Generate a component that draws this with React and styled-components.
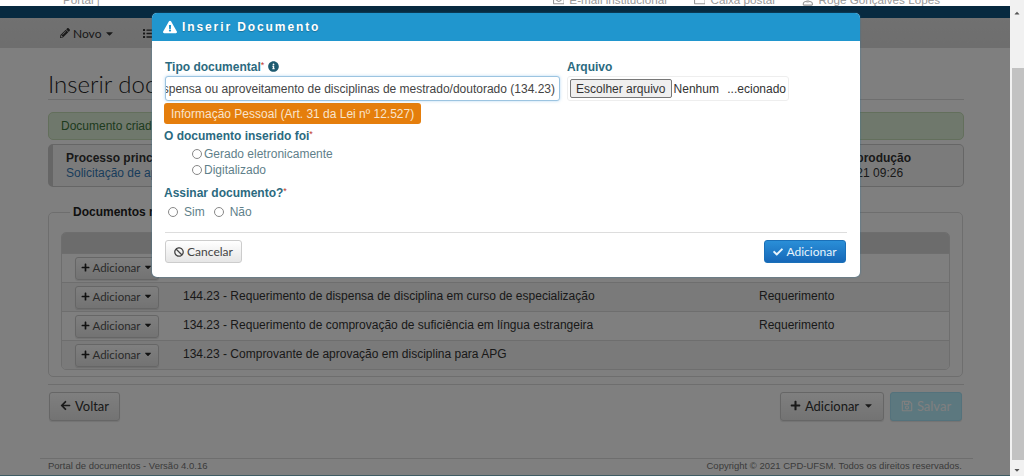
import styled, { createGlobalStyle } from "styled-components";
import {
	FaPencilAlt, FaCaretDown, FaList, FaExclamationTriangle, FaInfoCircle, FaBan,
	FaCheck, FaPlus, FaArrowLeft, FaRegSave, FaRegEnvelope, FaRegFolder, FaRegUser,
	FaCaretUp,
} from "react-icons/fa";

const docs = [
	{ id: 1, text: "", kind: "" },
	{ id: 2, text: "144.23 - Requerimento de dispensa de disciplina em curso de especialização", kind: "Requerimento" },
	{ id: 3, text: "134.23 - Requerimento de comprovação de suficiência em língua estrangeira", kind: "Requerimento" },
	{ id: 4, text: "134.23 - Comprovante de aprovação em disciplina para APG", kind: "" },
];

function App() {
	return (
		<Screen>
			<GlobalStyle />
			<Page>
				<TopStrip>
					<TopLink>Portal |</TopLink>
					<TopLinks>
						<TopLink><FaRegEnvelope /> E-mail institucional</TopLink>
						<TopLink><FaRegFolder /> Caixa postal</TopLink>
						<TopLink><FaRegUser /> Rogé Gonçalves Lopes</TopLink>
					</TopLinks>
				</TopStrip>
				<NavyBar />
				<Menu>
					<MenuItem><FaPencilAlt size={10} /> Novo <FaCaretDown size={11} /></MenuItem>
					<MenuItem><FaList size={11} /></MenuItem>
				</Menu>
				<Content>
					<Title>Inserir documento</Title>
					<SuccessAlert>Documento criado com sucesso</SuccessAlert>
					<ProcessBox>
						<div>
							<strong>Processo principal</strong>
							<ProcessLink>Solicitação de aproveitamento</ProcessLink>
						</div>
						<ProcessDate>
							<strong>Data de produção</strong>
							<span>14/05/2021 09:26</span>
						</ProcessDate>
					</ProcessBox>
					<DocsField>
						<legend>Documentos relacionados</legend>
						<DocsTable>
							<TableHead />
							{docs.map((doc) => (
								<DocRow key={doc.id}>
									<AddSmall><FaPlus size={9} /> <span>Adicionar</span> <FaCaretDown size={10} /></AddSmall>
									<DocText>{doc.text}</DocText>
									<DocKind>{doc.kind}</DocKind>
								</DocRow>
							))}
						</DocsTable>
					</DocsField>
					<Rule />
					<Actions>
						<PageButton $width="71px"><FaArrowLeft size={11} /> Voltar</PageButton>
						<ActionsRight>
							<PageButton $width="104px"><FaPlus size={11} /> Adicionar <FaCaretDown size={11} /></PageButton>
							<SaveButton $width="72px"><FaRegSave size={12} /> Salvar</SaveButton>
						</ActionsRight>
					</Actions>
				</Content>
				<Footer>
					<span>Portal de documentos - Versão 4.0.16</span>
					<span>Copyright © 2021 CPD-UFSM. Todos os direitos reservados.</span>
				</Footer>
				<BottomBar />
				<Backdrop />
				<Modal>
					<ModalHeader><FaExclamationTriangle size={14} /> Inserir Documento</ModalHeader>
					<ModalBody>
						<TopFields>
							<TypeField>
								<FieldLabel>Tipo documental<Req>*</Req> <FaInfoCircle size={11} /></FieldLabel>
								<TypeInput>
									<span>Requerimento de dispensa ou aproveitamento de disciplinas de mestrado/doutorado (134.23)</span>
								</TypeInput>
							</TypeField>
							<div>
								<FieldLabel>Arquivo</FieldLabel>
								<FileInput>
									<FileButton>Escolher arquivo</FileButton>
									<span>Nenhum ...ecionado</span>
								</FileInput>
							</div>
						</TopFields>
						<Badge>Informação Pessoal (Art. 31 da Lei nº 12.527)</Badge>
						<GroupLabel>O documento inserido foi<Req>*</Req></GroupLabel>
						<StackedRadios>
							<RadioLabel><input type="radio" name="origem" /> Gerado eletronicamente</RadioLabel>
							<RadioLabel><input type="radio" name="origem" /> Digitalizado</RadioLabel>
						</StackedRadios>
						<GroupLabel $sign>Assinar documento?<Req>*</Req></GroupLabel>
						<InlineRadios>
							<RadioLabel $inline><input type="radio" name="assinar" /> Sim</RadioLabel>
							<RadioLabel $inline><input type="radio" name="assinar" /> Não</RadioLabel>
						</InlineRadios>
						<ModalFooter>
							<CancelButton><FaBan size={10} /> Cancelar</CancelButton>
							<ConfirmButton><FaCheck size={10} /> Adicionar</ConfirmButton>
						</ModalFooter>
					</ModalBody>
				</Modal>
			</Page>
			<ScrollBar>
				<FaCaretUp size={8} />
				<ScrollThumb />
				<FaCaretDown size={8} />
			</ScrollBar>
		</Screen>
	);
}

const GlobalStyle = createGlobalStyle`
	html, body {
		margin: 0;
		height: 100%;
		overflow: hidden;
		background: #fff;
		font-family: "Liberation Sans", Arial, sans-serif;
	}
	* {
		box-sizing: border-box;
	}
`;

const Screen = styled.div`
	display: flex;
	width: 1024px;
	height: 476px;
	overflow: hidden;
`;

const Page = styled.div`
	position: relative;
	flex: 1;
	display: flex;
	flex-direction: column;
	background: #fff;
	overflow: hidden;
`;

const TopStrip = styled.div`
	height: 6px;
	display: flex;
	justify-content: space-between;
	align-items: flex-end;
	overflow: hidden;
	padding: 0 70px 0 63px;
	background: #fff;
	flex-shrink: 0;
`;

const TopLinks = styled.div`
	display: flex;
	gap: 27px;
`;

const TopLink = styled.span`
	display: flex;
	align-items: center;
	gap: 5px;
	font-size: 11.7px;
	line-height: 12px;
	color: #999;
	white-space: nowrap;
	flex-shrink: 0;
`;

const NavyBar = styled.div`
	height: 12px;
	background: #0f5480;
	flex-shrink: 0;
`;

const Menu = styled.div`
	height: 30px;
	display: flex;
	align-items: center;
	gap: 28px;
	padding-left: 60px;
	background: linear-gradient(#e2e2e2, #dcdcdc);
	flex-shrink: 0;
`;

const MenuItem = styled.span`
	display: flex;
	align-items: center;
	gap: 3px;
	font-family: Lato, sans-serif;
	font-size: 12px;
	color: #333;
`;

const Content = styled.div`
	padding: 22px 46px 0 48px;
	height: 410px;
	flex-shrink: 0;
`;

const Title = styled.h1`
	margin: 0 0 12px;
	height: 30px;
	font-family: Lato, sans-serif;
	font-weight: 300;
	font-size: 24px;
	line-height: 28px;
	color: #222;
	border-bottom: 1px solid #ddd;
`;

const SuccessAlert = styled.div`
	height: 28px;
	padding: 0 12px;
	display: flex;
	align-items: center;
	font-size: 12px;
	color: #3c763d;
	background: #dff0d8;
	border: 1px solid #c6dfb8;
	border-radius: 5px;
`;

const ProcessBox = styled.div`
	margin-top: 4px;
	height: 43px;
	display: flex;
	justify-content: space-between;
	padding: 6px 52px 0 13px;
	font-size: 12px;
	line-height: 15px;
	color: #333;
	background: #f7f7f7;
	border: 1px solid #ccc;
	border-left: 5px solid #ccc;
	border-radius: 5px;
`;

const ProcessLink = styled.div`
	color: #337ab7;
`;

const ProcessDate = styled.div`
	display: flex;
	flex-direction: column;
`;

const DocsField = styled.fieldset`
	margin: 18px 0 0;
	width: 915px;
	height: 172px;
	padding: 13px 12px 0;
	border: 1px solid #ddd;
	border-radius: 5px;

	legend {
		margin-left: 9px;
		padding: 0 3px;
		font-size: 12px;
		line-height: 14px;
		font-weight: bold;
		color: #222;
	}
`;

const DocsTable = styled.div`
	border: 1px solid #ddd;
	border-radius: 5px;
	overflow: hidden;
`;

const TableHead = styled.div`
	height: 20px;
	background: #d8d8d8;
`;

const DocRow = styled.div`
	height: 29px;
	display: flex;
	align-items: center;
	padding-left: 13px;
	font-size: 12px;
	color: #333;
	border-top: 1px solid #ddd;
	&:nth-child(odd) {
		background: #f4f4f4;
	}
`;

const AddSmall = styled.span`
	width: 84px;
	height: 23px;
	padding-bottom: 2px;
	flex-shrink: 0;
	display: flex;
	align-items: center;
	justify-content: center;
	gap: 3px;
	font-family: Lato, sans-serif;
	font-size: 11.5px;
	color: #222;
	background: linear-gradient(#fff, #e6e6e6);
	border: 1px solid #ccc;
	border-radius: 3px;
	box-shadow: 0 1px 1px rgba(0, 0, 0, 0.1);
	span {
		color: #555;
	}
`;

const DocText = styled.span`
	width: 576px;
	margin: 0 0 2px 24px;
	flex-shrink: 0;
`;

const DocKind = styled.span`
	margin-bottom: 2px;
`;

const Rule = styled.div`
	margin-top: 7px;
	height: 1px;
	background: #ddd;
`;

const Actions = styled.div`
	margin: 7px 2px 0 1px;
	display: flex;
	justify-content: space-between;
`;

const ActionsRight = styled.div`
	display: flex;
	gap: 6px;
`;

const PageButton = styled.span`
	height: 29px;
	width: ${(p) => p.$width};
	padding-bottom: 2px;
	display: flex;
	align-items: center;
	justify-content: center;
	gap: 4px;
	font-family: Lato, sans-serif;
	font-size: 13px;
	color: #333;
	background: linear-gradient(#fff, #e6e6e6);
	border: 1px solid #ccc;
	border-radius: 3px;
	box-shadow: 0 1px 1px rgba(0, 0, 0, 0.1);
	white-space: nowrap;
`;

const SaveButton = styled(PageButton)`
	color: #fff;
	background: #b8f0ff;
	border-color: #a8e4f8;
`;

const Footer = styled.div`
	margin: 0 37px 0 40px;
	height: 17px;
	display: flex;
	justify-content: space-between;
	align-items: center;
	padding: 0 11px 3px 8px;
	font-size: 9.5px;
	color: #777;
	border-top: 1px solid #ddd;
	flex-shrink: 0;
`;

const BottomBar = styled.div`
	flex: 1;
	background: #7fb8c8;
`;

const Backdrop = styled.div`
	position: absolute;
	top: 6px;
	left: 0;
	right: 0;
	bottom: 0;
	z-index: 10;
	background: rgba(0, 0, 0, 0.5);
`;

const Modal = styled.div`
	position: absolute;
	left: 152px;
	top: 13px;
	z-index: 20;
	width: 708px;
	height: 264px;
	background: #fff;
	border-radius: 5px;
	overflow: hidden;
	box-shadow: 0 0 2px rgba(30, 120, 170, 0.7);
`;

const ModalHeader = styled.div`
	height: 28px;
	display: flex;
	align-items: center;
	gap: 5px;
	padding-left: 11px;
	font-size: 12px;
	font-weight: bold;
	letter-spacing: 1.9px;
	color: #fff;
	background: #2096ce;
	text-shadow: 0 1px 1px rgba(0, 0, 0, 0.25);
`;

const ModalBody = styled.div`
	padding: 19px 13px 0 12px;
	font-size: 12px;
`;

const TopFields = styled.div`
	display: flex;
	gap: 7px;
	padding-left: 1px;
`;

const TypeField = styled.div`
	width: 395px;
`;

const FieldLabel = styled.div`
	height: 16px;
	font-size: 12px;
	line-height: 15px;
	font-weight: bold;
	color: #2b6a80;
	svg {
		vertical-align: -1px;
		color: #1d5a70;
	}
`;

const Req = styled.span`
	font-size: 9px;
	line-height: 0;
	vertical-align: 3px;
	font-weight: normal;
	color: #c0392b;
`;

const TypeInput = styled.div`
	height: 25px;
	display: flex;
	align-items: center;
	justify-content: flex-end;
	overflow: hidden;
	padding: 0 4px;
	font-size: 12px;
	color: #444;
	background: #fff;
	border: 1px solid #9cc4e0;
	border-radius: 3px;
	box-shadow: 0 0 3px rgba(102, 175, 233, 0.5);
	span {
		flex-shrink: 0;
		white-space: nowrap;
	}
`;

const FileInput = styled.div`
	width: 222px;
	height: 25px;
	display: flex;
	align-items: center;
	gap: 2px;
	padding: 0 2px;
	font-size: 12px;
	word-spacing: 5px;
	color: #333;
	white-space: nowrap;
	border: 1px solid #eee;
	border-radius: 3px;
`;

const FileButton = styled.span`
	width: 102px;
	height: 19px;
	display: flex;
	align-items: center;
	justify-content: center;
	word-spacing: 0;
	background: #efefef;
	border: 1px solid #777;
	border-radius: 2px;
`;

const Badge = styled.div`
	width: 257px;
	height: 21px;
	margin-top: 2px;
	display: flex;
	align-items: center;
	padding-left: 7px;
	font-size: 12px;
	white-space: nowrap;
	color: #f8e4cc;
	background: #e57e0c;
	border-radius: 3px;
`;

const GroupLabel = styled.div`
	margin-top: ${(p) => (p.$sign ? "8px" : "5px")};
	height: 15px;
	font-size: 12px;
	line-height: 15px;
	font-weight: bold;
	color: #2b6a80;
`;

const StackedRadios = styled.div`
	margin-top: 2px;
	padding-left: 28px;
	display: flex;
	flex-direction: column;
`;

const InlineRadios = styled.div`
	margin-top: 3px;
	padding-left: 4px;
	display: flex;
	gap: 9px;
`;

const RadioLabel = styled.label`
	height: 16px;
	display: flex;
	align-items: center;
	gap: ${(p) => (p.$inline ? "6px" : "2px")};
	font-size: 12px;
	color: #5f7f8a;

	input {
		appearance: none;
		width: 10px;
		height: 10px;
		margin: 0;
		background: #fff;
		border: 1px solid #888;
		border-radius: 50%;
	}
`;

const ModalFooter = styled.div`
	margin: 12px 0 0 1px;
	padding-top: 7px;
	display: flex;
	justify-content: space-between;
	border-top: 1px solid #ddd;
`;

const CancelButton = styled.span`
	width: 77px;
	height: 23px;
	display: flex;
	align-items: center;
	justify-content: center;
	gap: 3px;
	font-family: Lato, sans-serif;
	font-size: 12px;
	color: #444;
	background: linear-gradient(#fff, #e6e6e6);
	border: 1px solid #ccc;
	border-radius: 3px;
`;

const ConfirmButton = styled(CancelButton)`
	width: 82px;
	margin-right: 1px;
	color: #e8f4fc;
	background: linear-gradient(#2a8fd8, #1668b8);
	border-color: #1a70b8;
`;

const ScrollBar = styled.div`
	width: 14px;
	flex-shrink: 0;
	display: flex;
	flex-direction: column;
	align-items: center;
	padding-top: 9px;
	background: #f1f1f1;
	color: #555;
`;

const ScrollThumb = styled.div`
	width: 12px;
	height: 392px;
	margin: 51px 0 6px 2px;
	background: #c2c2c2;
`;

export default App;
